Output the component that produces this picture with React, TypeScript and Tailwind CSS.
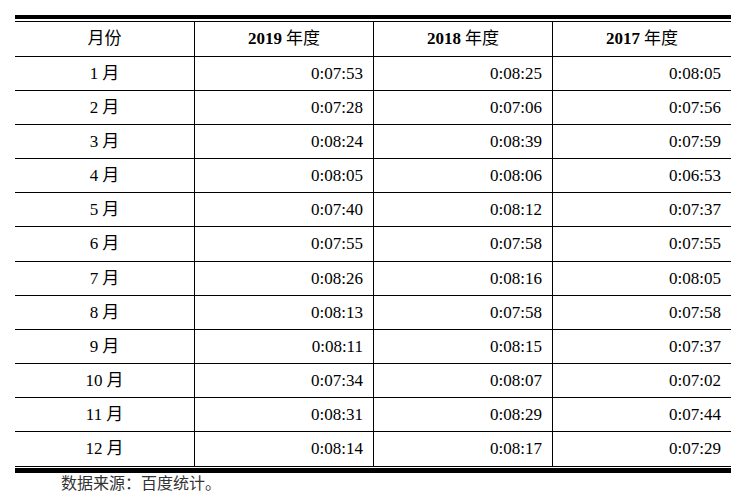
const rows: [string, string, string, string][] = [
  ["1", "0:07:53", "0:08:25", "0:08:05"],
  ["2", "0:07:28", "0:07:06", "0:07:56"],
  ["3", "0:08:24", "0:08:39", "0:07:59"],
  ["4", "0:08:05", "0:08:06", "0:06:53"],
  ["5", "0:07:40", "0:08:12", "0:07:37"],
  ["6", "0:07:55", "0:07:58", "0:07:55"],
  ["7", "0:08:26", "0:08:16", "0:08:05"],
  ["8", "0:08:13", "0:07:58", "0:07:58"],
  ["9", "0:08:11", "0:08:15", "0:07:37"],
  ["10", "0:07:34", "0:08:07", "0:07:02"],
  ["11", "0:08:31", "0:08:29", "0:07:44"],
  ["12", "0:08:14", "0:08:17", "0:07:29"],
];

const years = ["2019", "2018", "2017"];

export default function App() {
  return (
    <div className="min-h-[503px] bg-white pt-[15px] text-black font-[Liberation_Serif,Noto_Sans_CJK_SC,serif]">
      <div className="ml-[15px] w-[716px]">
        <div className="h-[4px] bg-black" />
        <div className="h-[2px]" />
        <div className="border-t border-black">
          <div className="grid h-[35px] grid-cols-[179px_179px_179px_179px] border-b border-black text-[17px]">
            <div className="flex items-center justify-center">月份</div>
            {years.map((y) => (
              <div key={y} className="flex items-center justify-center border-l border-black">
                <span className="font-bold">{y}</span>
                <span className="ml-[4px]">年度</span>
              </div>
            ))}
          </div>
          {rows.map((r, i) => (
            <div
              key={r[0]}
              className={`grid grid-cols-[179px_179px_179px_179px] border-b border-black text-[17px] ${
                i % 6 === 5 ? "h-[35px]" : "h-[34px]"
              }`}
            >
              <div className="flex items-center justify-center">
                {r[0]}
                <span className="ml-[4px]">月</span>
              </div>
              <div className="flex items-center justify-end border-l border-black pr-[10px]">{r[1]}</div>
              <div className="flex items-center justify-end border-l border-black pr-[10px]">{r[2]}</div>
              <div className="flex items-center justify-end border-l border-black pr-[10px]">{r[3]}</div>
            </div>
          ))}
        </div>
        <div className="h-[1px]" />
        <div className="h-[5px] bg-black" />
      </div>
      <p className="ml-[61px] text-[16px] leading-[22px] text-[#333]">数据来源：百度统计。</p>
    </div>
  );
}
